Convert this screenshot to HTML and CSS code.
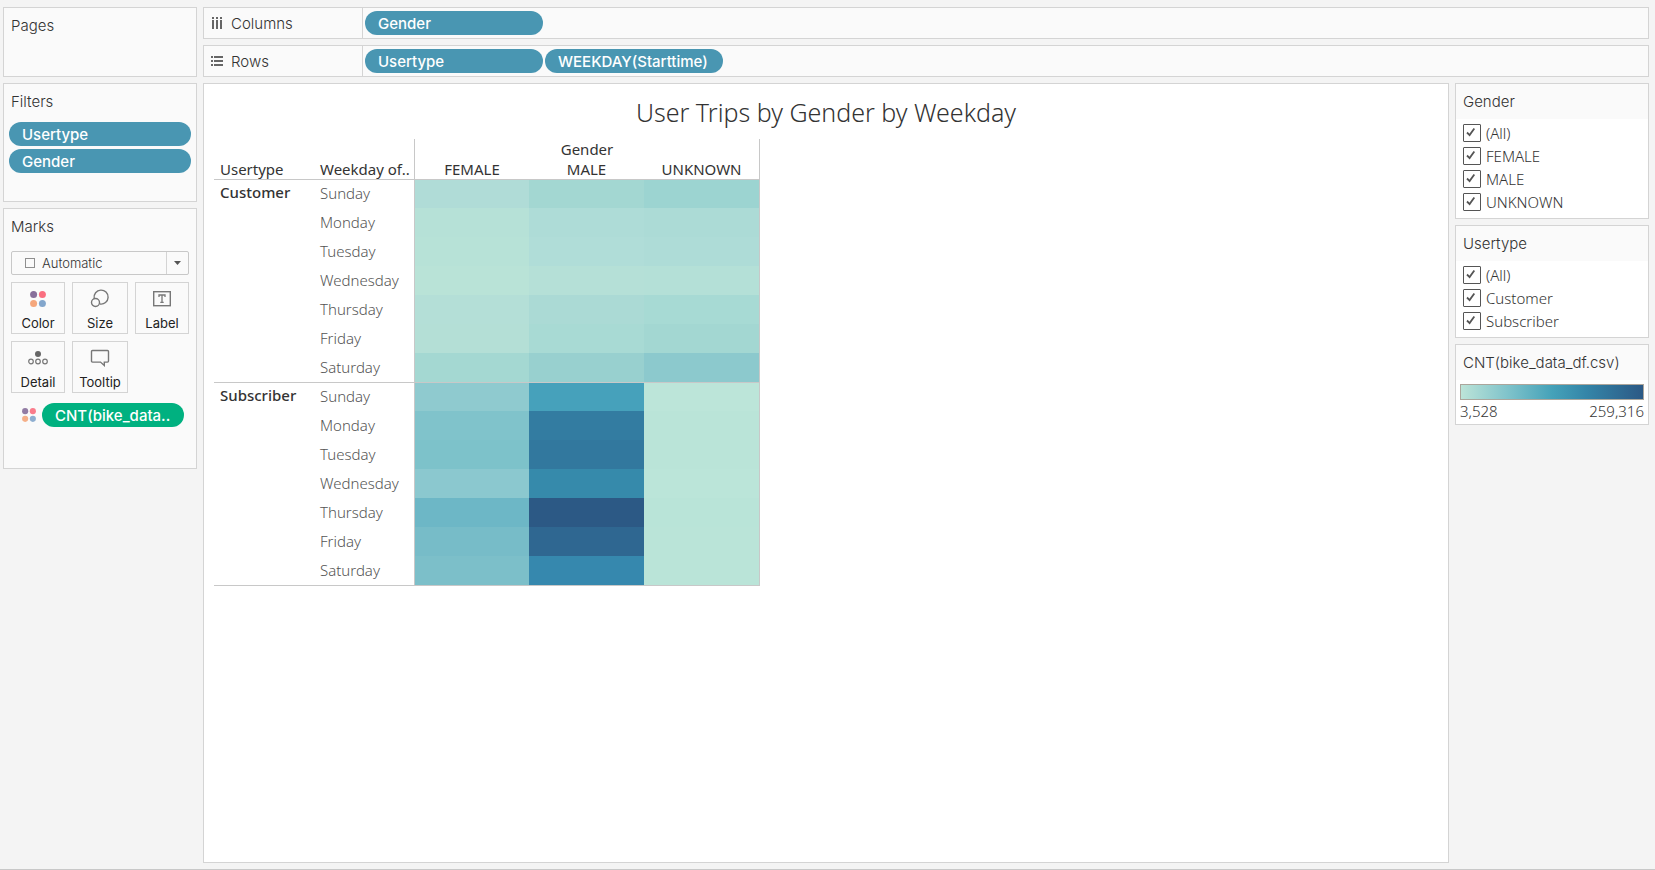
FILE: index.html
```html
<!DOCTYPE html>
<html lang="en">
<head>
<meta charset="utf-8">
<title>User Trips by Gender by Weekday</title>
<link rel="stylesheet" href="styles.css">
</head>
<body>
<svg class="defs" aria-hidden="true">
  <symbol id="dots" viewBox="0 0 16 16">
    <circle cx="3.6" cy="3.6" r="3.5" fill="#876f9b"/><circle cx="12.4" cy="3.6" r="3.5" fill="#fa6f80"/>
    <circle cx="3.6" cy="12.4" r="3.5" fill="#f5a77c"/><circle cx="12.4" cy="12.4" r="3.5" fill="#83a6cc"/>
  </symbol>
</svg>
<div class="workspace">
  <aside class="side">
    <section class="card pages"><h2 class="card-title">Pages</h2></section>
    <section class="card filters">
      <h2 class="card-title">Filters</h2>
      <div class="filter-list">
        <button class="pill" type="button">Usertype</button>
        <button class="pill" type="button">Gender</button>
      </div>
    </section>
    <section class="card marks">
      <h2 class="card-title">Marks</h2>
      <div class="mark-type">
        <svg class="mark-shape" viewBox="0 0 10 10"><rect x=".5" y=".5" width="9" height="9" fill="none" stroke="#8f8f8f"/></svg>
        <select class="mark-select" aria-label="Mark type"><option>Automatic</option></select>
      </div>
      <div class="mark-grid">
        <button class="mark-button" type="button"><svg class="icon" viewBox="0 0 20 20"><use href="#dots" x="2" y="3" width="16" height="16"/></svg>Color</button>
        <button class="mark-button" type="button"><svg class="icon" viewBox="0 0 20 20" fill="none" stroke="#777" stroke-width="1.4"><path d="M4.200 10.300A7 7 0 1 1 10 16"/><circle cx="5.500" cy="14.500" r="4"/></svg>Size</button>
        <button class="mark-button" type="button"><svg class="icon" viewBox="0 0 20 20" fill="none" stroke="#777"><rect x="1.7" y="3.7" width="16.6" height="14" stroke-width="1.4"/><path d="M7 9V7h6v2M10 7v7.400M8.300 14.400h3.400" stroke-width="1.3"/></svg>Label</button>
        <button class="mark-button" type="button"><svg class="icon" viewBox="0 0 20 20" fill="none" stroke="#777" stroke-width="1.2"><circle cx="10" cy="7" r="3" fill="#666" stroke="none"/><circle cx="3" cy="14.5" r="2.3"/><circle cx="10" cy="14.5" r="2.3"/><circle cx="17" cy="14.5" r="2.3"/></svg>Detail</button>
        <button class="mark-button" type="button"><svg class="icon" viewBox="0 0 20 20" fill="none" stroke="#777" stroke-width="1.4"><path d="M2.500 3.500h15q1 0 1 1v9.600q0 1-1 1h-3.200v3.400l-3.800-3.400h-8q-1 0-1-1V4.500q0-1 1-1z"/></svg>Tooltip</button>
      </div>
      <div class="encoding">
        <svg class="encoding-icon" viewBox="0 0 16 16"><use href="#dots"/></svg>
        <button class="pill measure" type="button">CNT(bike_data..</button>
      </div>
    </section>
  </aside>
  <main class="main">
    <section class="shelf">
      <h2 class="shelf-name"><svg class="shelf-icon" viewBox="0 0 12 12" fill="#666"><path d="M1 0h2v2H1zM5 0h2v2H5zM9 0h2v2H9zM1 3h2v9H1zM5 3h2v9H5zM9 3h2v9H9z"/></svg>Columns</h2>
      <div class="shelf-pills"><button class="pill" type="button">Gender</button></div>
    </section>
    <section class="shelf">
      <h2 class="shelf-name"><svg class="shelf-icon" viewBox="0 0 12 12" fill="#666"><path d="M0 1h2v2H0zM0 5h2v2H0zM0 9h2v2H0zM3 1h9v2H3zM3 5h9v2H3zM3 9h9v2H3z"/></svg>Rows</h2>
      <div class="shelf-pills"><button class="pill" type="button">Usertype</button><button class="pill" type="button">WEEKDAY(Starttime)</button></div>
    </section>
    <div class="content">
      <section class="view">
        <h1 class="view-title">User Trips by Gender by Weekday</h1>
        <table class="heatmap">
          <colgroup><col class="col-type"><col class="col-day"><col class="col-value"><col class="col-value"><col></colgroup>
          <thead>
            <tr><td colspan="2"></td><th class="edge-left edge-right" colspan="3" scope="colgroup">Gender</th></tr>
            <tr><th class="row-head" scope="col">Usertype</th><th class="row-head" scope="col">Weekday of..</th><th class="edge-left" scope="col">FEMALE</th><th scope="col">MALE</th><th class="edge-right" scope="col">UNKNOWN</th></tr>
          </thead>
          <tbody>
            <tr><th class="group" rowspan="7" scope="rowgroup">Customer</th><th class="day" scope="row">Sunday</th><td class="edge-left" style="background:#b0dcd7"></td><td style="background:#a3d7d2"></td><td style="background:#9cd4d1"></td></tr>
            <tr><th class="day" scope="row">Monday</th><td class="edge-left" style="background:#b6e1d7"></td><td style="background:#aedcd7"></td><td style="background:#acdbd6"></td></tr>
            <tr><th class="day" scope="row">Tuesday</th><td class="edge-left" style="background:#b7e2d7"></td><td style="background:#b0ddd8"></td><td style="background:#aedcd7"></td></tr>
            <tr><th class="day" scope="row">Wednesday</th><td class="edge-left" style="background:#b9e3d7"></td><td style="background:#b5e0d7"></td><td style="background:#b4e0d7"></td></tr>
            <tr><th class="day" scope="row">Thursday</th><td class="edge-left" style="background:#b4dfd7"></td><td style="background:#abdad5"></td><td style="background:#a7dad4"></td></tr>
            <tr><th class="day" scope="row">Friday</th><td class="edge-left" style="background:#b4dfd6"></td><td style="background:#a8dad4"></td><td style="background:#a3d7d2"></td></tr>
            <tr><th class="day" scope="row">Saturday</th><td class="edge-left" style="background:#a4d8d2"></td><td style="background:#98d0cf"></td><td style="background:#8cc9cd"></td></tr>
          </tbody>
          <tbody>
            <tr><th class="group" rowspan="7" scope="rowgroup">Subscriber</th><th class="day" scope="row">Sunday</th><td class="edge-left" style="background:#8fcacf"></td><td style="background:#46a1bb"></td><td style="background:#bce5d9"></td></tr>
            <tr><th class="day" scope="row">Monday</th><td class="edge-left" style="background:#80c3cb"></td><td style="background:#337ca1"></td><td style="background:#bae4d8"></td></tr>
            <tr><th class="day" scope="row">Tuesday</th><td class="edge-left" style="background:#7dc2ca"></td><td style="background:#32789e"></td><td style="background:#bae4d8"></td></tr>
            <tr><th class="day" scope="row">Wednesday</th><td class="edge-left" style="background:#8bc8cf"></td><td style="background:#368aab"></td><td style="background:#bbe5d9"></td></tr>
            <tr><th class="day" scope="row">Thursday</th><td class="edge-left" style="background:#6db7c6"></td><td style="background:#2c5985"></td><td style="background:#b9e4d8"></td></tr>
            <tr><th class="day" scope="row">Friday</th><td class="edge-left" style="background:#77bcc8"></td><td style="background:#2f6791"></td><td style="background:#bae4d8"></td></tr>
            <tr><th class="day" scope="row">Saturday</th><td class="edge-left" style="background:#7cbfc9"></td><td style="background:#3688ae"></td><td style="background:#bae4d8"></td></tr>
          </tbody>
        </table>
      </section>
      <aside class="legends">
        <section class="card">
          <h2 class="card-title">Gender</h2>
          <div class="checks">
            <label class="check"><input type="checkbox" checked>(All)</label>
            <label class="check"><input type="checkbox" checked>FEMALE</label>
            <label class="check"><input type="checkbox" checked>MALE</label>
            <label class="check"><input type="checkbox" checked>UNKNOWN</label>
          </div>
        </section>
        <section class="card">
          <h2 class="card-title">Usertype</h2>
          <div class="checks">
            <label class="check"><input type="checkbox" checked>(All)</label>
            <label class="check"><input type="checkbox" checked>Customer</label>
            <label class="check"><input type="checkbox" checked>Subscriber</label>
          </div>
        </section>
        <section class="card">
          <h2 class="card-title">CNT(bike_data_df.csv)</h2>
          <div class="scale">
            <div class="ramp"></div>
            <div class="range"><span>3,528</span><span>259,316</span></div>
          </div>
        </section>
      </aside>
    </div>
  </main>
</div>
</body>
</html>
```
FILE: styles.css
```css
* { box-sizing: border-box; }
body {
  margin: 0;
  background: #f4f4f4;
  color: #333;
  font: 15px/20px "Noto Sans", "Open Sans", sans-serif;
}
h1, h2 { margin: 0; font-weight: 400; }
button, select { font: inherit; color: inherit; }
.defs { display: none; }
.workspace {
  display: flex;
  gap: 6px;
  min-height: 100vh;
  padding: 7px 6px 6px 3px;
  border-bottom: 1px solid #c8c8c8;
}
.side { flex: 0 0 194px; display: flex; flex-direction: column; gap: 6px; }
.card { background: #fafafa; border: 1px solid #d4d4d4; }
.card-title { padding: 8px 7px 7px; font: 300 15px/20px Inter, sans-serif; }
.pages { min-height: 70px; }
.filters { padding-bottom: 28px; }
.filter-list { display: flex; flex-direction: column; gap: 3px; padding: 3px 5px 0; }
.pill {
  height: 24px;
  padding: 2px 13px 0;
  border: 0;
  border-radius: 12px;
  background: #4996b2;
  color: #fff;
  font: 500 15px/22px Inter, sans-serif;
  text-align: left;
  white-space: nowrap;
}
.marks { padding-bottom: 41px; }
.mark-type {
  display: flex;
  align-items: center;
  height: 24px;
  margin: 7px 7px 0;
  padding-left: 13px;
  border: 1px solid #c8c8c8;
  border-radius: 2px;
}
.mark-shape { width: 10px; height: 10px; }
.mark-select {
  flex: 1;
  height: 22px;
  padding: 0 0 0 7px;
  border: 0;
  appearance: none;
  font: 300 13px/22px Inter, sans-serif;
  background: url("data:image/svg+xml,%3Csvg xmlns='http://www.w3.org/2000/svg' width='22' height='22'%3E%3Cpath d='M.5 0v22' stroke='%23d4d4d4'/%3E%3Cpath d='M8 9h7l-3.500 4z' fill='%23555'/%3E%3C/svg%3E") right center no-repeat;
}
.mark-grid { display: grid; grid-template-columns: 54fr 56fr 54fr; gap: 7px; padding: 7px 7px 0; }
.mark-button {
  display: flex;
  flex-direction: column;
  align-items: center;
  gap: 6px;
  height: 52px;
  padding: 5px 0 0;
  border: 1px solid #d4d4d4;
  background: #fafafa;
  color: #222;
  font: 400 13px/18px Inter, sans-serif;
}
.icon { width: 20px; height: 20px; }
.encoding { display: flex; align-items: center; gap: 6px; padding: 10px 12px 0 18px; }
.encoding-icon { width: 14px; height: 14px; opacity: .9; }
.measure { flex: 1; background: #00b180; }
.main { flex: 1; display: flex; flex-direction: column; gap: 6px; min-width: 0; }
.shelf { display: flex; height: 32px; background: #fafafa; border: 1px solid #d4d4d4; }
.shelf-name {
  display: flex;
  align-items: center;
  gap: 8px;
  width: 159px;
  padding: 2px 0 0 7px;
  border-right: 1px solid #d4d4d4;
  font: 300 15px/20px Inter, sans-serif;
}
.shelf-icon { width: 12px; height: 12px; margin-bottom: 3px; }
.shelf-pills { display: flex; gap: 2px; padding: 3px 2px; }
.shelf-pills .pill { width: 178px; }
.content { flex: 1; display: flex; gap: 6px; }
.view { flex: 1; padding: 10px; background: #fff; border: 1px solid #d4d4d4; }
.view-title { text-align: center; font-size: 25px; line-height: 36px; font-weight: 300; }
.heatmap { width: 546px; margin-top: 9px; table-layout: fixed; border-spacing: 0; border-bottom: 1px solid #c8c8c8; }
.col-type { width: 100px; }
.col-day { width: 100px; }
.col-value { width: 115px; }
.heatmap th, .heatmap td { padding: 0; font-weight: 400; }
.heatmap thead tr { height: 20px; }
.heatmap .row-head, .heatmap .group, .heatmap .day { padding-left: 6px; text-align: left; }
.heatmap .row-head { white-space: nowrap; }
.heatmap .edge-left { border-left: 1px solid #c8c8c8; }
.heatmap .edge-right, .heatmap tbody td:last-child { border-right: 1px solid #c8c8c8; }
.heatmap tbody tr { height: 29px; }
.heatmap tbody tr:first-child > * { border-top: 1px solid #c8c8c8; }
.heatmap .group { vertical-align: top; padding-top: 2px; font-weight: 500; }
.heatmap .day { padding-bottom: 2px; color: #555; font-weight: 300; }
.legends { flex: 0 0 194px; display: flex; flex-direction: column; gap: 6px; }
.checks { padding: 2px 7px 5px; background: #fff; }
.check { display: flex; align-items: center; gap: 5px; height: 23px; font-weight: 300; }
.check input {
  width: 18px;
  height: 18px;
  margin: 0;
  appearance: none;
  border: 1px solid #555;
  border-radius: 1px;
  background: url("data:image/svg+xml,%3Csvg xmlns='http://www.w3.org/2000/svg' width='16' height='16'%3E%3Cpath d='M3 7.500l2.600 2.600L10.300 3.500' fill='none' stroke='%23555' stroke-width='1.800'/%3E%3C/svg%3E") no-repeat;
}
.scale { padding: 4px; background: #fff; }
.ramp { height: 16px; border: 1px solid #aca69c; background: linear-gradient(90deg, #bce4d8, #81c4cb 25%, #45a2b9 50%, #3485a8 69%, #2c5985); }
.range { display: flex; justify-content: space-between; padding-top: 2px; line-height: 18px; font-weight: 300; }
```
